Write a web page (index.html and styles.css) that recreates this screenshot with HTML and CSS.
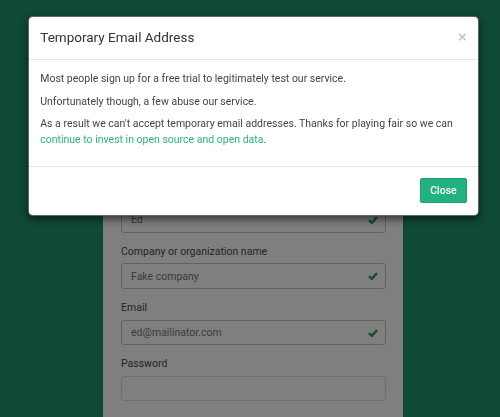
FILE: index.html
```html
<!DOCTYPE html>
<html lang="en">
<head>
    <meta charset="UTF-8">
    <meta name="viewport" content="width=device-width, initial-scale=1.0">
    <title>Sign up</title>
    <link rel="stylesheet" href="styles.css">
</head>
<body>

<div class="signup-panel">
    <form class="signup-form">
        <div class="form-group has-success">
            <label for="name">Name</label>
            <div class="input-wrap">
                <input type="text" id="name" value="Ed">
                <svg class="feedback" viewBox="0 0 10 8" width="10" height="8"><path d="M1 4.2 L3.8 6.8 L9 1.2"/></svg>
            </div>
        </div>
        <div class="form-group has-success">
            <label for="company">Company or organization name</label>
            <div class="input-wrap">
                <input type="text" id="company" value="Fake company">
                <svg class="feedback" viewBox="0 0 10 8" width="10" height="8"><path d="M1 4.2 L3.8 6.8 L9 1.2"/></svg>
            </div>
        </div>
        <div class="form-group has-success">
            <label for="email">Email</label>
            <div class="input-wrap">
                <input type="email" id="email" value="ed@mailinator.com">
                <svg class="feedback" viewBox="0 0 10 8" width="10" height="8"><path d="M1 4.2 L3.8 6.8 L9 1.2"/></svg>
            </div>
        </div>
        <div class="form-group">
            <label for="password">Password</label>
            <div class="input-wrap">
                <input type="password" id="password">
            </div>
        </div>
    </form>
</div>

<div class="modal-backdrop"></div>

<div class="modal">
    <div class="modal-header">
        <button class="close" type="button">&times;</button>
        <h4 class="modal-title">Temporary Email Address</h4>
    </div>
    <div class="modal-body">
        <p>Most people sign up for a free trial to legitimately test our service.</p>
        <p>Unfortunately though, a few abuse our service.</p>
        <p>As a result we can't accept temporary email addresses. Thanks for playing fair so we can <a href="#">continue to invest in open source and open data</a>.</p>
    </div>
    <div class="modal-footer">
        <button class="btn-primary" type="button">Close</button>
    </div>
</div>

</body>
</html>
```

FILE: styles.css
```css
body {
    font-family: Roboto, "Liberation Sans", sans-serif;
    font-size: 10.5px;
    line-height: 1.5;
    margin: 0;
    height: 417px;
    overflow: hidden;
    background-color: #1e946e;
    color: #444;
}
.signup-panel {
    width: 300px;
    margin: 150px 0 0 103px;
    padding: 37.5px 17px 0 18px;
    box-sizing: border-box;
    background: white;
}
.form-group {
    margin-bottom: 11.25px;
}
.form-group:last-child {
    margin-bottom: 0;
    padding-bottom: 17px;
}
.form-group label {
    display: block;
    line-height: 15.75px;
    margin-bottom: 3.75px;
    color: #4a4a4a;
}
.input-wrap {
    position: relative;
}
.input-wrap input {
    display: block;
    width: 100%;
    height: 25.5px;
    box-sizing: border-box;
    padding: 4.5px 9px;
    border: 1px solid #dcdcdc;
    border-radius: 3px;
    font-family: inherit;
    font-size: 10.5px;
    color: #777;
    background: white;
}
.has-success .input-wrap input {
    border-color: #b8cfb8;
}
.feedback {
    position: absolute;
    right: 8px;
    top: 9px;
}
.feedback path {
    fill: none;
    stroke: #379a50;
    stroke-width: 2.5;
}
.modal-backdrop {
    position: fixed;
    top: 0;
    left: 0;
    right: 0;
    bottom: 0;
    background: rgba(0, 0, 0, 0.5);
}
.modal {
    position: absolute;
    top: 16px;
    left: 28px;
    width: 451px;
    box-sizing: border-box;
    background: white;
    border: 1px solid rgba(0, 0, 0, 0.6);
    border-radius: 5px;
    box-shadow: 0 3px 8px rgba(0, 0, 0, 0.6);
}
.modal-header {
    padding: 11.25px;
    border-bottom: 1px solid #e5e5e5;
}
.modal-title {
    margin: 0;
    font-size: 13.5px;
    font-weight: normal;
    line-height: 19.5px;
    color: #333;
}
.close {
    float: right;
    margin-top: -1px;
    padding: 0;
    border: none;
    background: none;
    font-family: "Liberation Sans", sans-serif;
    font-size: 15px;
    font-weight: bold;
    line-height: 19px;
    color: #c8c8c8;
    cursor: pointer;
}
.modal-body {
    padding: 11.25px;
}
.modal-body p {
    margin: 0 0 7px;
    line-height: 15.5px;
}
.modal-body a {
    color: #2cb482;
    text-decoration: none;
}
.modal-footer {
    padding: 11.25px;
    border-top: 1px solid #e5e5e5;
    text-align: right;
}
.btn-primary {
    height: 25.5px;
    padding: 0 9px;
    border: 1px solid #1e9f71;
    border-radius: 2px;
    background-color: #22b27f;
    color: white;
    font-family: inherit;
    font-size: 10.5px;
    font-weight: 500;
    cursor: pointer;
}
```
